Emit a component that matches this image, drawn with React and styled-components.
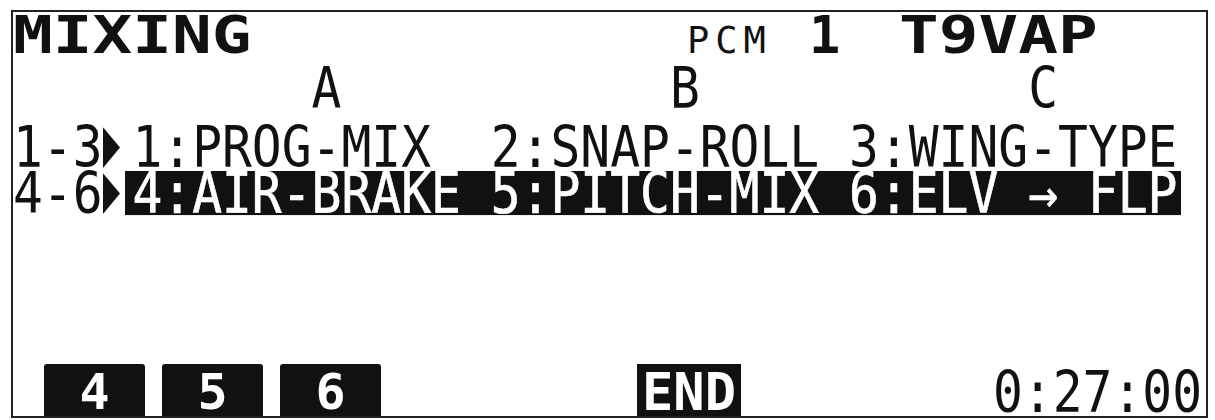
import React from 'react'
import styled, { createGlobalStyle } from 'styled-components'

const CELL = 29.86

const GlobalStyle = createGlobalStyle`
  html, body {
    margin: 0;
    padding: 0;
    background: #fff;
  }
  body {
    width: 1215px;
    height: 420px;
    overflow: hidden;
    box-sizing: border-box;
    padding: 10px 0 0 11px;
    font-family: "DejaVu Sans Mono", "Liberation Mono", monospace;
    color: #111;
  }
`

const columns = [
  { key: 'A', at: 11 },
  { key: 'B', at: 23 },
  { key: 'C', at: 35 },
]

function Pointer() {
  return (
    <PointerBox>
      <svg width="17" height="36" viewBox="0 0 17 36">
        <polygon points="0,0 17,18 0,36" />
      </svg>
    </PointerBox>
  )
}

function App() {
  return (
    <>
      <GlobalStyle />
      <Screen>
        <TitleRow>
          <TitleCell $w={674}>
            <Wide>MIXING</Wide>
          </TitleCell>
          <TitleCell $w={122}>
            <Pcm>PCM</Pcm>
          </TitleCell>
          <TitleCell $w={90}>
            <Bold>1</Bold>
          </TitleCell>
          <TitleCell>
            <Wide>T9VAP</Wide>
          </TitleCell>
        </TitleRow>

        <HeaderGrid>
          {columns.map((c) => (
            <ColLetter key={c.key} $at={c.at}>
              {c.key}
            </ColLetter>
          ))}
        </HeaderGrid>

        <Line $top={20.5}>
          <span>1-3</span>
          <Pointer />
          <span>{'1:PROG-MIX  2:SNAP-ROLL 3:WING-TYPE'}</span>
        </Line>

        <Line $top={7.5}>
          <span>4-6</span>
          <Pointer />
          <Highlight>{'4:AIR-BRAKE 5:PITCH-MIX 6:ELV → FLP'}</Highlight>
        </Line>

        <Bottom>
          <Tabs>
            <Tab $w={101}>4</Tab>
            <Tab $w={101}>5</Tab>
            <Tab $w={101}>6</Tab>
          </Tabs>
          <EndTab>END</EndTab>
          <Clock>0:27:00</Clock>
        </Bottom>
      </Screen>
    </>
  )
}

const Screen = styled.div`
  box-sizing: border-box;
  width: 1197px;
  height: 408px;
  border: 2px solid #222;
  display: flex;
  flex-direction: column;
`

const TitleRow = styled.div`
  display: flex;
  align-items: baseline;
  flex: none;
  height: 46px;
  line-height: 46px;
  white-space: pre;
`

const TitleCell = styled.div`
  flex: none;
  width: ${(p) => (p.$w ? `${p.$w}px` : 'auto')};
`

const Wide = styled.span`
  display: inline-block;
  font-size: 52px;
  font-weight: 700;
  transform: scaleX(1.27);
  transform-origin: left center;
`

const Bold = styled.span`
  font-size: 52px;
  font-weight: 700;
`

const Pcm = styled.span`
  font-size: 37px;
  letter-spacing: 6px;
`

const lcdText = `
  font-size: 49.6px;
  line-height: 41.7px;
  white-space: pre;
  transform: scaleY(1.13);
  transform-origin: left top;
`

const HeaderGrid = styled.div`
  ${lcdText}
  display: grid;
  grid-template-columns: repeat(40, ${CELL}px);
  flex: none;
  margin-top: 8px;
  height: 38.5px;
`

const ColLetter = styled.span`
  grid-column: ${(p) => p.$at};
`

const Line = styled.div`
  ${lcdText}
  display: flex;
  align-items: flex-start;
  flex: none;
  margin-top: ${(p) => p.$top}px;
  height: 38.5px;
`

const PointerBox = styled.span`
  display: flex;
  flex: none;
  width: ${CELL}px;
  padding-top: 1.8px;

  svg {
    display: block;
    fill: #111;
  }
`

const Highlight = styled.span`
  display: block;
  height: 38.9px;
  margin-left: -7.4px;
  padding: 0 3.8px 0 7.4px;
  background: #111;
  color: #fff;
  -webkit-text-stroke: 0.6px #fff;
`

const Bottom = styled.div`
  margin-top: auto;
  display: flex;
  align-items: flex-end;
  flex: none;
  height: 52px;
  padding-left: 31px;
`

const Tabs = styled.div`
  display: flex;
  gap: 17px;
`

const Tab = styled.div`
  box-sizing: border-box;
  width: ${(p) => p.$w}px;
  height: 52px;
  padding-top: 4px;
  border-radius: 3px 3px 0 0;
  background: #111;
  color: #fff;
  font-size: 50px;
  font-weight: 700;
  line-height: 48px;
  text-align: center;
`

const EndTab = styled(Tab)`
  width: 104px;
  margin-left: 256px;
  border-radius: 0;
  font-size: 52px;
`

const Clock = styled.div`
  ${lcdText}
  margin-left: auto;
  margin-right: 4px;
  margin-bottom: 7.2px;
  height: 38.5px;
`

export default App
